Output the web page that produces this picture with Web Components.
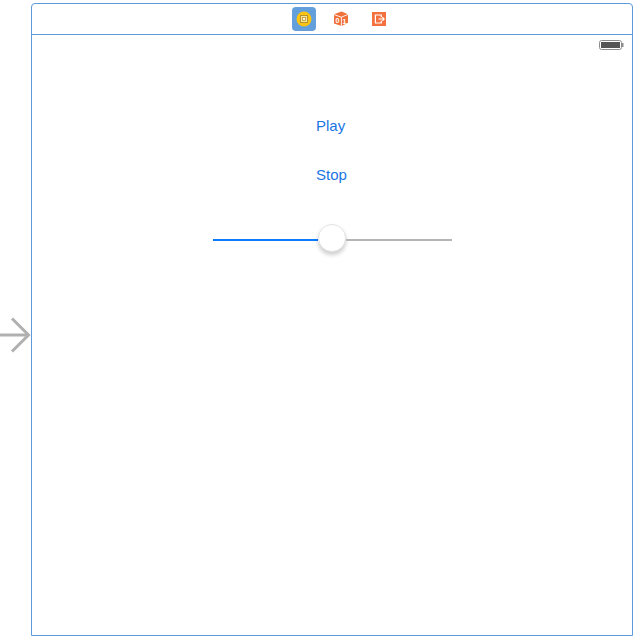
<!DOCTYPE html>
<html>
<head>
<meta charset="utf-8">
<title>Storyboard</title>
<style>
html, body { margin: 0; padding: 0; background: #fff; }
body { font-family: "Liberation Sans", Arial, sans-serif; }
</style>
</head>
<body>
<storyboard-scene>
    <scene-button>Play</scene-button>
    <scene-button>Stop</scene-button>
    <scene-slider></scene-slider>
</storyboard-scene>

<script>
class EntryArrow extends HTMLElement {
    constructor() {
        super();
        this.attachShadow({ mode: "open" });
        this.shadowRoot.innerHTML = `
      <style>
      :host{
        display: block;
        width: 31px;
        height: 40px;
        flex: none;
        margin-top: 31px;
      }
      svg{ display: block; }
      </style>
      <svg width="31" height="40" viewBox="0 0 31 40">
        <path d="M0 20H29" fill="none" stroke="#b0b0b0" stroke-width="3"/>
        <path d="M12 3.5L28.5 20L12 36.5" fill="none" stroke="#b0b0b0" stroke-width="3"/>
      </svg>`;
    }
}

class SceneDock extends HTMLElement {
    constructor() {
        super();
        this.attachShadow({ mode: "open" });
        this.shadowRoot.innerHTML = `
      <style>
      :host{
        display: flex;
        align-items: center;
        justify-content: center;
        height: 30px;
        border-bottom: 1px solid #5b9bd9;
        gap: 14px;
        padding-left: 18px;
      }
      .item{
        width: 24px;
        height: 24px;
        display: flex;
        align-items: center;
        justify-content: center;
        border-radius: 4px;
      }
      .selected{ background: #639fdb; margin-right: -1px; }
      svg{ display: block; }
      text{
        font-family: "Liberation Sans", Arial, sans-serif;
        font-weight: bold;
        font-size: 7px;
        fill: #fff;
      }
      </style>
      <div class="item selected">
        <svg width="18" height="18" viewBox="0 0 18 18">
          <circle cx="9" cy="9" r="7.5" fill="#fcc40f"/>
          <rect x="5.5" y="5.5" width="7" height="7" fill="#f6e49f" stroke="#b7942b"/>
          <rect x="7.5" y="7.5" width="3" height="3" fill="#fdf6dc" stroke="#bd9a2c" stroke-width="0.8"/>
        </svg>
      </div>
      <div class="item">
        <svg width="16" height="16" viewBox="0 0 16 16">
          <path d="M8.5 0.5L15 3.2V11.8L8.6 15L1 12.5V3.2Z" fill="#f0703a"/>
          <path d="M1 3.6L8.4 6.2L15 3.4" fill="none" stroke="#fff" stroke-width="0.9"/>
          <path d="M8.4 6.2V15" stroke="#fff" stroke-width="0.9"/>
          <text x="2.4" y="12">0</text>
          <text x="9.6" y="12.5">1</text>
        </svg>
      </div>
      <div class="item">
        <svg width="14" height="14" viewBox="0 0 14 14">
          <rect width="14" height="14" fill="#f5703f"/>
          <path d="M9.3 5.2V3H3.4V11H9.3V8.8" fill="none" stroke="#fff" stroke-width="1.2"/>
          <path d="M6.5 7H12.2M10.4 5.2L12.2 7L10.4 8.8" fill="none" stroke="#fff" stroke-width="1.1"/>
        </svg>
      </div>`;
    }
}

class StatusBattery extends HTMLElement {
    constructor() {
        super();
        this.attachShadow({ mode: "open" });
        this.shadowRoot.innerHTML = `
      <style>
      :host{
        display: flex;
        justify-content: flex-end;
        padding: 5px 8px 0 0;
        height: 10px;
      }
      svg{ display: block; }
      </style>
      <svg width="25" height="10" viewBox="0 0 25 10">
        <rect x="0.5" y="0.5" width="22" height="9" rx="2" fill="#fff" stroke="#8c8c8c"/>
        <rect x="2" y="2" width="19" height="6" fill="#555"/>
        <rect x="23" y="3" width="1.5" height="4" fill="#8c8c8c"/>
      </svg>`;
    }
}

class SceneButton extends HTMLElement {
    constructor() {
        super();
        this.attachShadow({ mode: "open" });
        this.shadowRoot.innerHTML = `
      <style>
      :host{
        display: block;
        width: 54px;
        height: 49px;
        line-height: 49px;
        font-size: 15px;
        color: #1a76e3;
        padding-left: 22px;
      }
      </style>
      <slot></slot>`;
    }
}

class SceneSlider extends HTMLElement {
    constructor() {
        super();
        this.attachShadow({ mode: "open" });
        this.shadowRoot.innerHTML = `
      <style>
      :host{
        display: flex;
        align-items: center;
        width: 239px;
        height: 28px;
        margin-top: 25px;
      }
      .min{ width: 105px; height: 2px; margin-top: 3px; background: #0b7bfb; }
      .max{ flex: 1; height: 2px; margin-top: 3px; background: #b5b5b5; }
      .thumb{
        width: 28px;
        height: 28px;
        box-sizing: border-box;
        flex: none;
        border-radius: 50%;
        background: #fff;
        border: 1px solid #e4e4e4;
        box-shadow: 0 3px 4px rgba(0,0,0,.2);
      }
      </style>
      <div class="min"></div>
      <div class="thumb"></div>
      <div class="max"></div>`;
    }
}

class StoryboardScene extends HTMLElement {
    constructor() {
        super();
        this.attachShadow({ mode: "open" });
        this.shadowRoot.innerHTML = `
      <style>
      :host{
        display: flex;
        align-items: center;
        width: 636px;
        height: 639px;
        box-sizing: border-box;
        padding: 3px 3px 3px 0;
      }
      .frame{
        flex: 1;
        height: 100%;
        box-sizing: border-box;
        border: 1px solid #5b9bd9;
        border-radius: 4px 4px 0 0;
        background: #fff;
      }
      .view{
        display: flex;
        flex-direction: column;
        align-items: center;
        padding-top: 51px;
      }
      </style>
      <entry-arrow></entry-arrow>
      <div class="frame">
        <scene-dock></scene-dock>
        <status-battery></status-battery>
        <div class="view"><slot></slot></div>
      </div>`;
    }
}

customElements.define("entry-arrow", EntryArrow);
customElements.define("scene-dock", SceneDock);
customElements.define("status-battery", StatusBattery);
customElements.define("scene-button", SceneButton);
customElements.define("scene-slider", SceneSlider);
customElements.define("storyboard-scene", StoryboardScene);
</script>
</body>
</html>
